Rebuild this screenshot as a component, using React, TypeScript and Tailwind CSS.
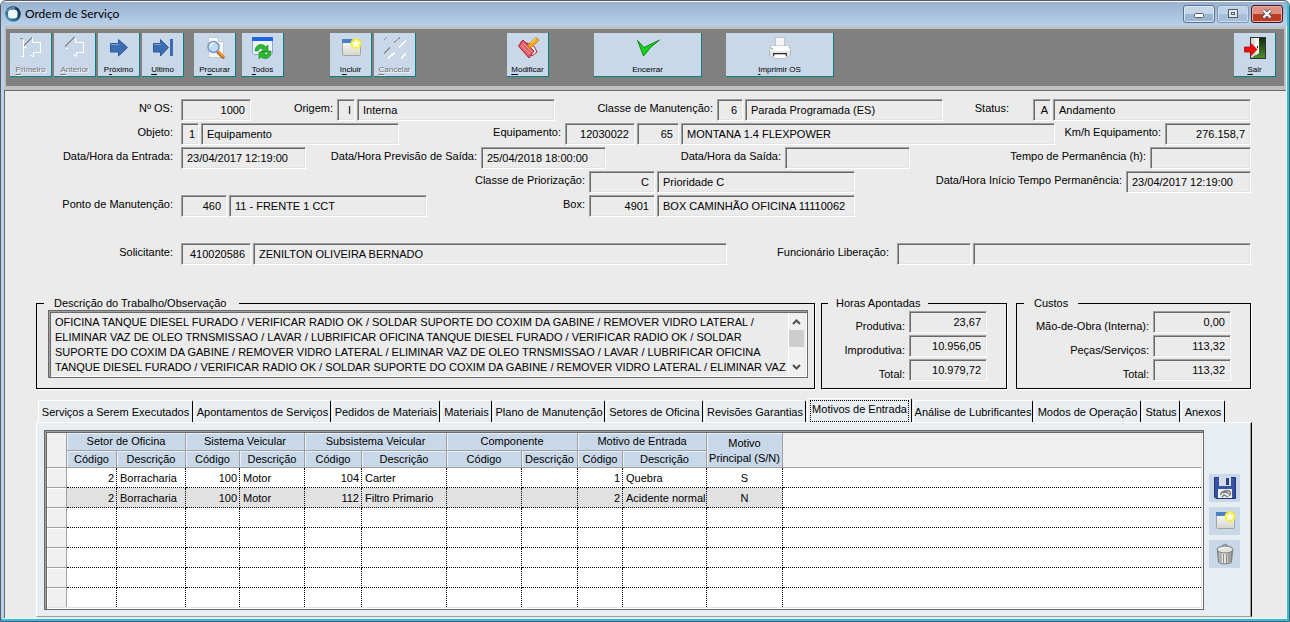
import type { ReactNode } from 'react'
import clsx from 'clsx'

/* ---------- icons ---------- */

function AppIcon() {
  return (
    <svg width="16" height="16" viewBox="0 0 16 16" aria-hidden="true">
      <defs>
        <linearGradient id="app-ring" x1="0" y1="1" x2="1" y2="0">
          <stop offset="0" stopColor="#5fb0cc" />
          <stop offset="0.5" stopColor="#1d5478" />
          <stop offset="1" stopColor="#12224a" />
        </linearGradient>
      </defs>
      <circle cx="8" cy="8" r="7.8" fill="url(#app-ring)" />
      <rect x="3" y="3.500" width="9.500" height="9" rx="3.5" fill="#eef6fa" />
      <path d="M2 5.5C3.5 2.5 7 1.2 10 2.2" stroke="#9fd0e4" strokeWidth="1" fill="none" />
    </svg>
  )
}

function FirstIcon() {
  return (
    <svg width="24" height="24" viewBox="0 0 24 24" fill="none" shapeRendering="crispEdges" aria-hidden="true">
      <path d="M1.500 20.500h3v-17M5.500 11.500l2-1M13.500 2v4.500h8v10h-7v4l-3-1" stroke="#fff" />
      <path d="M1 2.500h3M5 9.500l8-8" stroke="#8e8e8e" />
    </svg>
  )
}

function PreviousIcon() {
  return (
    <svg width="24" height="24" viewBox="0 0 24 24" fill="none" shapeRendering="crispEdges" aria-hidden="true">
      <path d="M12.500 2v4.500h8v10h-7v4l-3-2M3 12.500h2" stroke="#fff" />
      <path d="M2 10.500l9.500-9.500" stroke="#8e8e8e" />
    </svg>
  )
}

function NextIcon() {
  return (
    <svg width="24" height="24" viewBox="0 0 24 24" aria-hidden="true">
      <path d="M3.500 7.500h8V3.500l9 8-9 8.500v-4h-8z" fill="#3c6db0" stroke="#2f5a98" />
      <path d="M4 8.500h8" stroke="#7fa3d2" />
    </svg>
  )
}

function LastIcon() {
  return (
    <svg width="24" height="24" viewBox="0 0 24 24" aria-hidden="true">
      <path d="M2.500 7.500h7V3.500l8 8-8 8.500v-4h-7z" fill="#3c6db0" stroke="#2f5a98" />
      <path d="M3 8.500h7" stroke="#7fa3d2" />
      <path d="M19 3h3v17h-3z" fill="#3c6db0" />
    </svg>
  )
}

function SearchIcon() {
  return (
    <svg width="24" height="24" viewBox="0 0 24 24" aria-hidden="true">
      <path d="M5.500 1.500h10l5 4v16h-15z" fill="#f4f7fb" stroke="#c2cbd8" />
      <path d="M15.500 1.500v4h5" fill="#dde5ef" stroke="#b4bfce" />
      <path d="M15 16l5 5" stroke="#b5651a" strokeWidth="3.500" strokeLinecap="round" />
      <path d="M16 16l4 4" stroke="#f2a13c" strokeWidth="1.800" strokeLinecap="round" />
      <circle cx="10.500" cy="11" r="5.500" fill="#bcdcfa" stroke="#7f97c0" strokeWidth="1.500" />
      <path d="M7.500 10.500c0-2 1.500-3.200 3.500-3.200" stroke="#fff" strokeWidth="1.500" fill="none" />
    </svg>
  )
}

function RefreshIcon() {
  return (
    <svg width="24" height="24" viewBox="0 0 24 24" aria-hidden="true">
      <rect x="1.500" y="1.500" width="20" height="17" rx="1" fill="#eef4fd" stroke="#8fa8cf" />
      <path d="M1 2a1 1 0 0 1 1-1h19a1 1 0 0 1 1 1v3H1z" fill="#1d62e0" />
      <path d="M4 15c0-6 7-9 11-4l2-2v7h-7l2-2c-2-2.500-4-1.500-5 1z" fill="#2fb832" stroke="#138417" strokeWidth="0.600" />
      <path d="M20 15c1 6-5 10-10 6l-2 2v-7h7l-2 2c2 2 4 0 4-3z" fill="#2fb832" stroke="#138417" strokeWidth="0.600" />
    </svg>
  )
}

function NewIcon() {
  return (
    <svg width="24" height="24" viewBox="0 0 24 24" aria-hidden="true">
      <defs>
        <linearGradient id="new-paper" x1="0" y1="0" x2="0" y2="1">
          <stop offset="0" stopColor="#fdfdfb" />
          <stop offset="1" stopColor="#d6d6d0" />
        </linearGradient>
      </defs>
      <rect x="3.500" y="3.500" width="18" height="16" rx="1" fill="url(#new-paper)" stroke="#a4a59f" />
      <path d="M3 3h12v4H3z" fill="#4a7fc6" />
      <circle cx="17" cy="7.500" r="5.500" fill="#f6ee3c" opacity="0.900" />
      <path d="M17 3l1.300 3 3.200.4-2.400 2 .7 3.300-2.800-1.700-2.800 1.700.7-3.300-2.400-2 3.200-.4z" fill="#fffff0" />
    </svg>
  )
}

function CancelIcon() {
  return (
    <svg width="24" height="24" viewBox="0 0 24 24" shapeRendering="crispEdges" aria-hidden="true">
      <path d="M1 3.500l3-2M11 6.500l6-5M1 17.500l6-6" stroke="#8e8e8e" fill="none" />
      <path d="M16 11.500l7-7M5 22.500l7-6M18 22.500l5-5" stroke="#fff" strokeWidth="1.500" fill="none" />
    </svg>
  )
}

function EditIcon() {
  return (
    <svg width="24" height="24" viewBox="0 0 24 24" aria-hidden="true">
      <path d="M6 5l-2 3 12 12 5-4-3-6z" fill="#fff" stroke="#b3202c" />
      <path d="M2.500 10l4.500-6 11 11-5 7z" fill="#e0606a" stroke="#b3202c" />
      <path d="M5 9l9 9M7 7l9 9" stroke="#f3a4aa" />
      <path d="M13 8l7-6.500 3 2.500-7 7-4 1z" fill="#f8a91c" stroke="#c87a10" strokeWidth="0.800" />
      <path d="M15 7l5-4.500" stroke="#fde38a" />
    </svg>
  )
}

function CheckIcon() {
  return (
    <svg width="24" height="24" viewBox="0 0 24 24" aria-hidden="true">
      <path d="M1.500 4.500l6.500 7L23.500 4 15 11 7.500 20z" fill="#13d31b" stroke="#0a7d10" strokeWidth="0.900" strokeLinejoin="round" />
    </svg>
  )
}

function PrinterIcon() {
  return (
    <svg width="24" height="24" viewBox="0 0 24 24" aria-hidden="true">
      <path d="M7.500 1.500h9v9h-9z" fill="#f4f4f4" stroke="#c4c4c4" />
      <path d="M3 10h18l1.500 4v5l-2 2h-17l-2-2v-5z" fill="#e6e6e6" stroke="#b8b8b8" />
      <path d="M3.500 10h17l1.500 5H2z" fill="#fbfbfb" />
      <path d="M5 17h14v3H5z" fill="#2a2a2a" />
      <path d="M6.500 18.500h11l1 4h-13z" fill="#fff" stroke="#c0c0c0" />
      <path d="M3 12h2v1.500H3z" fill="#7fd87f" />
    </svg>
  )
}

function ExitIcon() {
  return (
    <svg width="24" height="24" viewBox="0 0 24 24" aria-hidden="true">
      <defs>
        <linearGradient id="exit-grass" x1="0" y1="0" x2="0" y2="1">
          <stop offset="0" stopColor="#112611" />
          <stop offset="1" stopColor="#4f8f2c" />
        </linearGradient>
      </defs>
      <rect x="7.500" y="1.500" width="15" height="21" fill="url(#exit-grass)" stroke="#333" />
      <path d="M8 2h8v15l-8 5z" fill="#d8dad8" />
      <path d="M11 2h5v15l-3 2z" fill="#f3f4f3" />
      <path d="M14.500 10v2" stroke="#222" />
      <path d="M1.500 11h6V7l6.500 6.500-6.500 6.500v-4h-6z" fill="#f20d0d" stroke="#9e0b0b" strokeWidth="0.800" />
    </svg>
  )
}

function SaveIcon() {
  return (
    <svg width="24" height="24" viewBox="0 0 24 24" aria-hidden="true">
      <path d="M1.500 1.500h21v21H3l-1.500-1.500z" fill="#3552a4" stroke="#22336f" />
      <path d="M6 1h12v9H6z" fill="#d5dcea" />
      <path d="M13 2h3v7h-3z" fill="#2a4088" />
      <path d="M5 13h14v9H5z" fill="#eceff0" />
      <path d="M8 19c-1-3 4-5 8-4 2 1 2 3 0 5M10 17l3-1 3 2M9 21l2-2 4 2" stroke="#6d7274" fill="none" strokeWidth="1.300" />
    </svg>
  )
}

function TrashIcon() {
  return (
    <svg width="24" height="24" viewBox="0 0 24 24" aria-hidden="true">
      <defs>
        <linearGradient id="trash-can" x1="0" y1="0" x2="1" y2="0">
          <stop offset="0" stopColor="#9b9b98" />
          <stop offset="0.4" stopColor="#f4f4f0" />
          <stop offset="1" stopColor="#8b8b88" />
        </linearGradient>
      </defs>
      <path d="M4.500 8.500h15l-1 11.500c-1 2.500-12 2.500-13 0z" fill="url(#trash-can)" stroke="#757572" />
      <path d="M8 12v8M10.500 12v9M13.500 12v9M16 12v8" stroke="#8d8d8a" />
      <path d="M9.500 4.500c0-3 5-3 5 0" stroke="#757572" fill="none" />
      <ellipse cx="12" cy="7.500" rx="8" ry="3.500" fill="#e2e2de" stroke="#757572" />
      <path d="M7 7c2-1.500 7-2 9-1" stroke="#fff" fill="none" />
    </svg>
  )
}

/* ---------- window chrome ---------- */

function TitleBar() {
  return (
    <header className="flex h-[25px] shrink-0 items-start justify-between border-t border-white bg-linear-to-b from-[#98b1ce] to-[#b9d1eb] pl-1 pr-1">
      <div className="flex items-center gap-1 pt-1">
        <AppIcon />
        <h1 className="font-[Lato,'Open_Sans',sans-serif] text-[12px] leading-4">Ordem de Serviço</h1>
      </div>
      <div className="flex gap-[2px] pt-[3px]">
        <button
          aria-label="Minimizar"
          className="flex h-[18px] w-8 items-center justify-center rounded-[3px] border border-[#5c708a] bg-linear-to-b from-[#c6d7ea] from-50% to-[#9bb6d3] to-50% shadow-[inset_0_0_0_1px_#dbe7f4]"
        >
          <svg width="10" height="6" viewBox="0 0 10 6" className="mt-1">
            <rect x="0.500" y="0.500" width="9" height="4" rx="1" fill="#fff" stroke="#555b69" />
          </svg>
        </button>
        <button
          aria-label="Maximizar"
          disabled
          className="flex h-[18px] w-8 items-center justify-center rounded-[3px] border border-[#8398b4] bg-linear-to-b from-[#bdd0e6] from-50% to-[#a6bfda] to-50% shadow-[inset_0_0_0_1px_#cbdcee]"
        >
          <svg width="10" height="10" viewBox="0 0 10 10" fill="none">
            <rect x="0.500" y="0.500" width="9" height="8" fill="#dfe6ef" stroke="#555b69" />
            <rect x="3.500" y="3.500" width="3" height="2" stroke="#555b69" />
          </svg>
        </button>
        <button
          aria-label="Fechar"
          className="flex h-[18px] w-8 items-center justify-center rounded-[3px] border border-[#431422] bg-linear-to-b from-[#dd8f80] from-50% to-[#bb3c22] to-50% shadow-[inset_0_0_0_1px_#eab2a6]"
        >
          <svg width="12" height="10" viewBox="0 0 12 10" fill="none">
            <path d="M2.500 1.500l7 7M9.500 1.500l-7 7" stroke="#535666" strokeWidth="4" />
            <path d="M2.500 1.500l7 7M9.500 1.500l-7 7" stroke="#fff" strokeWidth="2.200" />
          </svg>
        </button>
      </div>
    </header>
  )
}

interface ToolButtonProps {
  // Parts of the caption around the underlined access key
  before?: string
  hotkey?: string
  after: string
  icon: ReactNode
  disabled?: boolean
  wide?: boolean
}

function ToolButton({ before, hotkey, after, icon, disabled, wide }: ToolButtonProps) {
  return (
    <button
      disabled={disabled}
      className={clsx(
        'flex h-11 flex-col items-center justify-between border-b border-r border-[#008080] bg-[#c8d8e8] pb-px pt-[3px] text-[8px] leading-[10px]',
        wide ? 'w-[108px]' : 'w-[42px]',
        disabled ? 'text-[#707070] [text-shadow:1px_1px_0_#fff]' : 'text-black',
      )}
    >
      {icon}
      <span className="whitespace-nowrap">
        {before}
        {hotkey && <span className="underline underline-offset-2">{hotkey}</span>}
        {after}
      </span>
    </button>
  )
}

function Toolbar() {
  return (
    <div className="border-x-2 border-y-[3px] border-[#c0c0c0]">
      <nav className="flex bg-[#808080] pb-[9px] pl-1 pr-2 pt-1" aria-label="Ferramentas">
        <div className="flex gap-[2px]">
          <ToolButton hotkey="P" after="rimeiro" icon={<FirstIcon />} disabled />
          <ToolButton hotkey="A" after="nterior" icon={<PreviousIcon />} disabled />
          <ToolButton before="P" hotkey="r" after="óximo" icon={<NextIcon />} />
          <ToolButton hotkey="U" after="ltimo" icon={<LastIcon />} />
        </div>
        <div className="ml-[10px] flex gap-[6px]">
          <ToolButton before="Pr" hotkey="o" after="curar" icon={<SearchIcon />} />
          <ToolButton hotkey="T" after="odos" icon={<RefreshIcon />} />
        </div>
        <div className="ml-[46px] flex gap-[2px]">
          <ToolButton before="I" hotkey="n" after="cluir" icon={<NewIcon />} />
          <ToolButton hotkey="C" after="ancelar" icon={<CancelIcon />} disabled />
        </div>
        <div className="ml-[91px] flex">
          <ToolButton hotkey="M" after="odificar" icon={<EditIcon />} />
        </div>
        <div className="ml-[45px] flex gap-6">
          <ToolButton after="Encerrar" icon={<CheckIcon />} wide />
          <ToolButton hotkey="I" after="mprimir OS" icon={<PrinterIcon />} wide />
        </div>
        <div className="ml-auto flex">
          <ToolButton hotkey="S" after="air" icon={<ExitIcon />} />
        </div>
      </nav>
    </div>
  )
}

/* ---------- form ---------- */

interface FieldProps {
  id?: string
  name?: string
  value?: string
  className: string
  right?: boolean
}

function Field({ id, name, value = '', className, right }: FieldProps) {
  return (
    <input
      id={id}
      aria-label={name}
      readOnly
      value={value}
      className={clsx(
        'h-[22px] min-w-0 border border-b-white border-l-[#a0a0a0] border-r-white border-t-[#a0a0a0] bg-[#ebebeb] shadow-[inset_1px_1px_0_#696969,inset_-1px_-1px_0_#e3e3e3] outline-none',
        right ? 'text-right' : 'pl-[5px]',
        className,
      )}
    />
  )
}

function Label({ htmlFor, className, children }: { htmlFor: string; className: string; children: ReactNode }) {
  return (
    <label htmlFor={htmlFor} className={clsx('shrink-0 whitespace-nowrap text-right leading-[18px]', className)}>
      {children}
    </label>
  )
}

function Row({ children }: { children: ReactNode }) {
  return <div className="flex h-6 items-start pr-px">{children}</div>
}

function OrderForm() {
  return (
    <div>
      <Row>
        <Label htmlFor="os" className="w-[145px] pr-2">Nº OS:</Label>
        <Field id="os" value="1000" right className="w-[70px] pr-[5px]" />
        <Label htmlFor="origem" className="w-[86px] pr-1">Origem:</Label>
        <div className="flex gap-[2px]">
          <Field id="origem" value="I" right className="w-[18px] pr-[3px]" />
          <Field name="Descrição da origem" value="Interna" className="w-[198px]" />
        </div>
        <Label htmlFor="classe" className="w-[162px] pr-1">Classe de Manutenção:</Label>
        <div className="flex gap-[2px]">
          <Field id="classe" value="6" right className="w-[26px] pr-[5px]" />
          <Field name="Descrição da classe" value="Parada Programada (ES)" className="w-[198px]" />
        </div>
        <Label htmlFor="status" className="ml-auto pr-6">Status:</Label>
        <div className="flex gap-[2px]">
          <Field id="status" value="A" right className="w-[18px] pr-[2px]" />
          <Field name="Descrição do status" value="Andamento" className="w-[198px]" />
        </div>
      </Row>
      <Row>
        <Label htmlFor="objeto" className="w-[145px] pr-2">Objeto:</Label>
        <div className="flex gap-[2px]">
          <Field id="objeto" value="1" right className="w-[18px] pr-[3px]" />
          <Field name="Descrição do objeto" value="Equipamento" className="w-[198px]" />
        </div>
        <Label htmlFor="equipamento" className="w-[166px] pr-1">Equipamento:</Label>
        <div className="flex flex-1 gap-[2px]">
          <Field id="equipamento" value="12030022" right className="w-[70px] pr-[5px]" />
          <Field name="Modelo" value="65" right className="w-[42px] pr-[5px]" />
          <Field name="Descrição do equipamento" value="MONTANA 1.4 FLEXPOWER" className="flex-1" />
        </div>
        <Label htmlFor="kmh" className="w-[110px] pr-1">Km/h Equipamento:</Label>
        <Field id="kmh" value="276.158,7" right className="w-[86px] pr-[5px]" />
      </Row>
      <Row>
        <Label htmlFor="entrada" className="w-[145px] pr-2">Data/Hora da Entrada:</Label>
        <Field id="entrada" value="23/04/2017 12:19:00" className="w-[125px]" />
        <Label htmlFor="previsao" className="w-[175px] pr-1">Data/Hora Previsão de Saída:</Label>
        <Field id="previsao" value="25/04/2018 18:00:00" className="w-[125px]" />
        <Label htmlFor="saida" className="w-[179px] pr-1">Data/Hora da Saída:</Label>
        <Field id="saida" className="w-[125px]" />
        <Label htmlFor="permanencia" className="ml-auto pr-1">Tempo de Permanência (h):</Label>
        <Field id="permanencia" right className="w-[101px] pr-[5px]" />
      </Row>
      <Row>
        <Label htmlFor="priorizacao" className="w-[553px] pr-1">Classe de Priorização:</Label>
        <div className="flex gap-[2px]">
          <Field id="priorizacao" value="C" right className="w-[66px] pr-[5px]" />
          <Field name="Descrição da priorização" value="Prioridade C" className="w-[198px]" />
        </div>
        <Label htmlFor="inicio" className="ml-auto pr-1">Data/Hora Início Tempo Permanência:</Label>
        <Field id="inicio" value="23/04/2017 12:19:00" className="w-[125px]" />
      </Row>
      <Row>
        <Label htmlFor="ponto" className="w-[145px] pr-2">Ponto de Manutenção:</Label>
        <div className="flex gap-[2px]">
          <Field id="ponto" value="460" right className="w-[46px] pr-[5px]" />
          <Field name="Descrição do ponto" value="11 - FRENTE 1 CCT" className="w-[198px]" />
        </div>
        <Label htmlFor="box" className="w-[162px] pr-1">Box:</Label>
        <div className="flex gap-[2px]">
          <Field id="box" value="4901" right className="w-[66px] pr-[5px]" />
          <Field name="Descrição do box" value="BOX CAMINHÃO OFICINA 11110062" className="w-[198px]" />
        </div>
      </Row>
      <div className="pt-6">
        <Row>
          <Label htmlFor="solicitante" className="w-[145px] pr-2">Solicitante:</Label>
          <div className="flex flex-1 gap-[2px]">
            <Field id="solicitante" value="410020586" right className="w-[70px] pr-[5px]" />
            <Field name="Nome do solicitante" value="ZENILTON OLIVEIRA BERNADO" className="flex-1" />
          </div>
          <Label htmlFor="liberacao" className="w-[170px] pr-2">Funcionário Liberação:</Label>
          <div className="flex gap-[2px]">
            <Field id="liberacao" right className="w-[74px] pr-[5px]" />
            <Field name="Nome do funcionário" className="w-[278px]" />
          </div>
        </Row>
      </div>
    </div>
  )
}

const workDescription = [
  'OFICINA TANQUE DIESEL FURADO / VERIFICAR RADIO OK / SOLDAR SUPORTE DO COXIM DA GABINE / REMOVER VIDRO LATERAL /',
  'ELIMINAR VAZ DE OLEO TRNSMISSAO / LAVAR / LUBRIFICAR OFICINA TANQUE DIESEL FURADO / VERIFICAR RADIO OK / SOLDAR',
  'SUPORTE DO COXIM DA GABINE / REMOVER VIDRO LATERAL / ELIMINAR VAZ DE OLEO TRNSMISSAO / LAVAR / LUBRIFICAR OFICINA',
  'TANQUE DIESEL FURADO / VERIFICAR RADIO OK / SOLDAR SUPORTE DO COXIM DA GABINE / REMOVER VIDRO LATERAL / ELIMINAR VAZ',
].join('\n')

function AmountRow({ id, label, value, labelWidth }: { id: string; label: string; value: string; labelWidth: string }) {
  return (
    <div className="flex h-6 items-start">
      <label htmlFor={id} className={clsx('whitespace-nowrap pr-1 pt-[7px] text-right leading-4', labelWidth)}>
        {label}
      </label>
      <Field id={id} value={value} right className="w-[78px] pr-[5px]" />
    </div>
  )
}

function Summary() {
  return (
    <div className="mt-[29px] flex h-[93px] pr-px">
      <fieldset className="min-w-0 flex-1 border border-black pl-[11px] pr-[6px] shadow-[1px_1px_0_#fff]">
        <legend className="-ml-1 pl-[10px] pr-[13px] leading-[14px]">Descrição do Trabalho/Observação</legend>
        <div className="flex h-[68px] border border-[#696969] bg-[#ebebeb] shadow-[inset_1px_1px_0_#a0a0a0,inset_2px_2px_0_#696969,inset_-1px_-1px_0_#fff] pb-[2px] pl-[2px] pr-[3px] pt-[2px]">
          <textarea
            readOnly
            aria-label="Descrição do Trabalho/Observação"
            value={workDescription}
            className="min-w-0 flex-1 resize-none overflow-hidden whitespace-pre pl-1 pt-[2px] leading-[15px] outline-none"
          />
          {/* Scroll bar */}
          <div className="flex w-4 flex-col items-center border-l border-white bg-[#f0f0f0]">
            <svg width="15" height="17" viewBox="0 0 15 17" fill="none" className="shrink-0">
              <path d="M4 11l3.500-3.500L11 11" stroke="#505050" strokeWidth="2" />
            </svg>
            <div className="h-[17px] w-[15px] shrink-0 bg-[#cdcdcd]" />
            <svg width="15" height="17" viewBox="0 0 15 17" fill="none" className="mt-auto shrink-0">
              <path d="M4 7l3.500 3.500L11 7" stroke="#505050" strokeWidth="2" />
            </svg>
          </div>
        </div>
      </fieldset>
      <fieldset className="ml-[6px] w-[186px] border border-black shadow-[1px_1px_0_#fff]">
        <legend className="ml-[6px] px-2 leading-[14px]">Horas Apontadas</legend>
        <div className="pt-px">
          <AmountRow id="produtiva" label="Produtiva:" value="23,67" labelWidth="w-[87px]" />
          <AmountRow id="improdutiva" label="Improdutiva:" value="10.956,05" labelWidth="w-[87px]" />
          <AmountRow id="total-horas" label="Total:" value="10.979,72" labelWidth="w-[87px]" />
        </div>
      </fieldset>
      <fieldset className="ml-[9px] w-[235px] border border-black shadow-[1px_1px_0_#fff]">
        <legend className="ml-[7px] px-[10px] leading-[14px]">Custos</legend>
        <div className="pt-px">
          <AmountRow id="mao-de-obra" label="Mão-de-Obra (Interna):" value="0,00" labelWidth="w-[136px]" />
          <AmountRow id="pecas" label="Peças/Serviços:" value="113,32" labelWidth="w-[136px]" />
          <AmountRow id="total-custos" label="Total:" value="113,32" labelWidth="w-[136px]" />
        </div>
      </fieldset>
    </div>
  )
}

/* ---------- tabs and grid ---------- */

const tabs = [
  { title: 'Serviços a Serem Executados', width: 'w-[155px]' },
  { title: 'Apontamentos de Serviços', width: 'w-[137px]' },
  { title: 'Pedidos de Materiais', width: 'w-[108px]' },
  { title: 'Materiais', width: 'w-[51px]' },
  { title: 'Plano de Manutenção', width: 'w-[112px]' },
  { title: 'Setores de Oficina', width: 'w-[97px]' },
  { title: 'Revisões Garantias', width: 'w-[102px]' },
  { title: 'Motivos de Entrada', width: 'w-[105px]' },
  { title: 'Análise de Lubrificantes', width: 'w-[120px]' },
  { title: 'Modos de Operação', width: 'w-[107px]' },
  { title: 'Status', width: 'w-[38px]' },
  { title: 'Anexos', width: 'w-[44px]' },
]

function Tabs() {
  return (
    <div role="tablist" className="flex h-6 items-end gap-px pl-[2px]">
      {tabs.map(({ title, width }) => {
        const active = title === 'Motivos de Entrada'
        return (
          <button
            key={title}
            role="tab"
            aria-selected={active}
            className={clsx(
              'flex shrink-0 justify-center whitespace-nowrap rounded-t-[2px] border-l border-r border-t border-l-white border-r-black border-t-white bg-[#e8edf2]',
              active ? 'h-6 pt-px' : 'h-[22px] pt-[3px]',
              width,
            )}
          >
            <span className={clsx('leading-4', active && 'border border-dotted border-black px-px')}>{title}</span>
          </button>
        )
      })}
    </div>
  )
}

const groups = ['Setor de Oficina', 'Sistema Veicular', 'Subsistema Veicular', 'Componente', 'Motivo de Entrada']

const entries = [
  ['2', 'Borracharia', '100', 'Motor', '104', 'Carter', '', '', '1', 'Quebra', 'S'],
  ['2', 'Borracharia', '100', 'Motor', '112', 'Filtro Primario', '', '', '2', 'Acidente normal', 'N'],
]

const blankEntry = Array<string>(11).fill('')
const rows = [...entries, ...Array<string[]>(5).fill(blankEntry)]

const headCell =
  'border-b border-r border-[#a0a0a0] bg-[#c8d8e8] p-0 text-center font-normal shadow-[inset_1px_1px_0_#e8f0f8]'

function EntryGrid() {
  return (
    <div className="min-w-0 flex-1 border border-[#696969] bg-white p-[2px] shadow-[inset_1px_1px_0_#a0a0a0,inset_2px_2px_0_#696969,inset_-1px_-1px_0_#fff,inset_-2px_-2px_0_#e3e3e3]">
      <table className="w-full table-fixed border-separate border-spacing-0">
        <colgroup>
          <col className="w-5" />
          <col className="w-[50px]" />
          <col className="w-[69px]" />
          <col className="w-[54px]" />
          <col className="w-[65px]" />
          <col className="w-[57px]" />
          <col className="w-[85px]" />
          <col className="w-[75px]" />
          <col className="w-14" />
          <col className="w-[45px]" />
          <col className="w-[84px]" />
          <col className="w-[76px]" />
          <col />
        </colgroup>
        <thead>
          <tr className="h-[18px]">
            <th rowSpan={2} className="border-b border-r border-[#a0a0a0] bg-[#f0f0f0] p-0" />
            {groups.map((group) => (
              <th key={group} colSpan={2} className={clsx(headCell, 'pb-px leading-[15px]')}>{group}</th>
            ))}
            <th rowSpan={2} className={clsx(headCell, 'pt-[2px] leading-[15px]')}>
              Motivo
              <br />
              <span className="whitespace-nowrap">Principal (S/N)</span>
            </th>
            <th rowSpan={2} className="border-b border-[#a0a0a0] bg-[#f0f0f0] p-0" />
          </tr>
          <tr className="h-[17px]">
            {groups.flatMap((group) => [
              <th key={`${group}-codigo`} className={headCell}>Código</th>,
              <th key={`${group}-descricao`} className={headCell}>Descrição</th>,
            ])}
          </tr>
        </thead>
        <tbody>
          {rows.map((row, r) => {
            const last = r === rows.length - 1
            return (
              <tr key={r} className={last ? 'h-[19px]' : 'h-5'}>
                <td className={clsx('border-r border-[#a0a0a0] bg-[#f0f0f0] p-0 shadow-[inset_1px_1px_0_#fff]', !last && 'border-b')} />
                {row.map((value, c) => (
                  <td
                    key={c}
                    className={clsx(
                      'overflow-hidden whitespace-nowrap border-r border-dotted border-black py-0',
                      !last && 'border-b',
                      r === 1 && 'bg-[#e1e1e1]',
                      c === 10 ? 'px-0 text-center' : c % 2 === 0 ? 'px-[2px] text-right' : 'pl-[3px] pr-0',
                    )}
                  >
                    {value}
                  </td>
                ))}
                <td className={clsx('border-dotted border-black p-0', !last && 'border-b')} />
              </tr>
            )
          })}
        </tbody>
      </table>
    </div>
  )
}

function SideButton({ label, children }: { label: string; children: ReactNode }) {
  return (
    <button aria-label={label} className="flex h-7 w-[31px] items-center justify-center bg-[#c8d8e8]">
      {children}
    </button>
  )
}

export default function App() {
  return (
    <div className="flex min-h-screen flex-col rounded-t-md border border-[#525b66] bg-[#b9d1ea] font-['Liberation_Sans',Arial,sans-serif] text-[11px] leading-4 text-black">
      <div className="flex flex-1 flex-col overflow-hidden rounded-t-md border-b-2 border-r-2 border-[#27c3e3]">
        <TitleBar />
        <div className="ml-[3px] flex flex-1 flex-col border-b border-r border-white bg-[#c0c0c0]">
          <Toolbar />
          <main className="mt-px flex-1 border-l border-t border-[#696969] bg-[#ebebeb] pb-px pl-[31px] pr-[34px] pt-2">
            <OrderForm />
            <Summary />
            <div className="mt-[9px]">
              <Tabs />
              <div
                role="tabpanel"
                className="flex border-b border-l border-r border-t border-b-[#a0a0a0] border-l-white border-r-black border-t-white bg-[#e8edf2] pb-[6px] pl-[7px] pr-[11px] pt-[7px] shadow-[inset_-1px_0_0_#a0a0a0]"
              >
                <EntryGrid />
                <div className="ml-[5px] flex flex-col gap-[5px] pt-11">
                  <SideButton label="Salvar"><SaveIcon /></SideButton>
                  <SideButton label="Incluir motivo"><NewIcon /></SideButton>
                  <SideButton label="Excluir motivo"><TrashIcon /></SideButton>
                </div>
              </div>
            </div>
          </main>
        </div>
      </div>
    </div>
  )
}
